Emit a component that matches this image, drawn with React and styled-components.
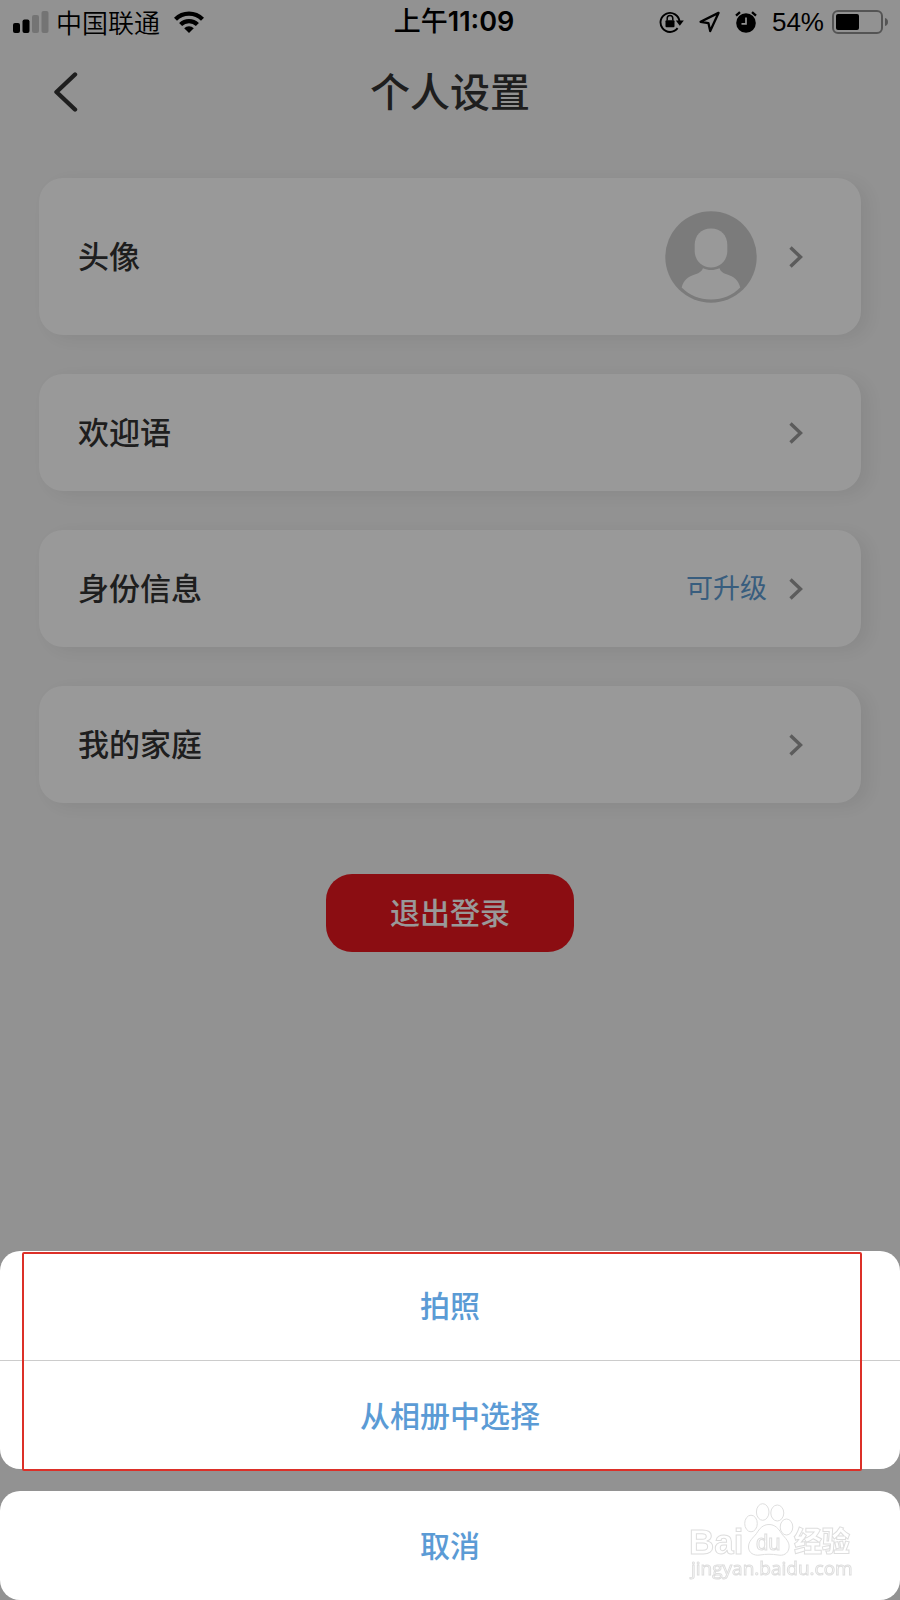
import { useState } from 'react';
import styled, { createGlobalStyle } from 'styled-components';

const rows = [
  { id: 'avatar', label: '头像', avatar: true },
  { id: 'welcome', label: '欢迎语' },
  { id: 'identity', label: '身份信息', note: '可升级' },
  { id: 'family', label: '我的家庭' },
];

function StatusBar() {
  return (
    <Status>
      <StatusGroup>
        <svg width="36" height="22" viewBox="0 0 36 22">
          <rect x="0" y="12" width="7" height="10" rx="2" />
          <rect x="9.500" y="8.500" width="7" height="13.500" rx="2" />
          <rect x="19" y="4" width="7" height="18" rx="2" opacity=".2" />
          <rect x="28.500" y="0" width="7" height="22" rx="2" opacity=".2" />
        </svg>
        <Carrier>中国联通</Carrier>
        <WifiIcon width="30" height="22" viewBox="0 0 30 22">
          <g fill="none" stroke="#000" strokeWidth="4.300">
            <path d="M1.500 8.200a19.200 19.200 0 0 1 27 0" />
            <path d="M6.600 13.600a11.900 11.900 0 0 1 16.800 0" />
          </g>
          <path d="M15 22l-4.800-4.800a6.800 6.800 0 0 1 9.600 0z" />
        </WifiIcon>
      </StatusGroup>
      <Time>
        <span>上午</span>11:09
      </Time>
      <StatusGroup $end>
        <svg width="25" height="22" viewBox="0 0 25 22">
          <path
            d="M18.600 17.200A9.500 9.500 0 1 1 20.500 10.500"
            fill="none"
            stroke="#000"
            strokeWidth="1.900"
          />
          <path d="M16.800 9.600h8l-4 5.200z" />
          <rect x="6.500" y="9.300" width="9" height="7" rx="1" />
          <path d="M8.200 9.500V7.300a2.800 2.800 0 0 1 5.600 0v2.200" fill="none" stroke="#000" strokeWidth="1.500" />
        </svg>
        <svg width="21" height="22" viewBox="0 0 21 22">
          <path
            d="M19.500 1.900L1.600 10.800l7.800 1.300 1.800 8z"
            fill="none"
            stroke="#000"
            strokeWidth="2.300"
            strokeLinejoin="round"
          />
        </svg>
        <svg width="22" height="22" viewBox="0 0 22 22">
          <circle cx="11" cy="12" r="9.800" />
          <path d="M1 4.600L5 1.200M21 4.600L17 1.200" stroke="#000" strokeWidth="2.400" />
          <path d="M11 6.500v6.300H6.500" fill="none" stroke="#f3f3f3" strokeWidth="1.700" />
        </svg>
        <Percent>54%</Percent>
        <svg width="57" height="24" viewBox="0 0 57 24">
          <rect x="1" y="1" width="49" height="22" rx="5" fill="none" stroke="#000" strokeOpacity=".42" strokeWidth="2" />
          <rect x="4" y="4" width="23" height="16" rx="2" />
          <path d="M53 8v8c2-.6 3-2 3-4s-1-3.400-3-4z" fillOpacity=".42" />
        </svg>
      </StatusGroup>
    </Status>
  );
}

function Avatar() {
  return (
    <svg width="92" height="92" viewBox="0 0 92 92">
      <circle cx="46" cy="46" r="45.700" fill="#cecece" />
      <path
        d="M46 17.500c10 0 16.300 7 16.300 16.500v6c0 9.500-7.300 16.500-16.300 16.500S29.700 49.500 29.700 40v-6C29.700 24.500 36 17.500 46 17.500z"
        fill="#fff"
      />
      <path
        d="M38 57.300c5 2.400 11 2.400 16.500 0 .8 3 3 4.600 7 6 7.500 2.300 12 6.200 13.700 13.200C67.500 84.500 57.500 88.500 46 88.500S24.500 84.500 16.700 76.500c1.700-7 6.300-10.900 13.800-13.200 4-1.400 6.500-3 7.500-6z"
        fill="#fff"
      />
    </svg>
  );
}

function Watermark() {
  return (
    <WatermarkSvg width="172" height="84" viewBox="0 0 172 84">
      <g fill="#fff" stroke="#dedede" strokeWidth="1">
        <text className="latin" x="7" y="53" fontSize="35" fontWeight="700">Bai</text>
        <ellipse cx="69" cy="22.500" rx="6.300" ry="8.300" />
        <ellipse cx="80.700" cy="11" rx="6.300" ry="8.300" />
        <ellipse cx="95.300" cy="12" rx="6.500" ry="8" />
        <ellipse cx="104.500" cy="26" rx="6.300" ry="8" />
        <path d="M87 23.500c6 0 9.500 4 12.500 9 4 5 8.500 8.500 7.500 14.500-1 6-6 8-11 7-6-1-12-1-18 0-6 1-11.500-2-11.500-8 0-6 4.500-9 8-13.500 3-5 6.500-9 12.500-9z" />
        <text className="latin" x="74" y="49" fontSize="22">du</text>
        <text className="cjk" x="112" y="51" fontSize="28" fontWeight="900">经验</text>
        <text x="9" y="74" fontSize="19">jingyan.baidu.com</text>
      </g>
    </WatermarkSvg>
  );
}

function App() {
  const [open, setOpen] = useState(true);

  return (
    <Page>
      <GlobalStyle />
      <StatusBar />
      <Header>
        <BackButton aria-label="返回">
          <svg width="24" height="40" viewBox="0 0 24 40">
            <path
              d="M21 2.500L2.500 20 21 37.500"
              fill="none"
              stroke="#333"
              strokeWidth="4.400"
              strokeLinecap="round"
              strokeLinejoin="round"
            />
          </svg>
        </BackButton>
        <h1>个人设置</h1>
      </Header>
      <List>
        {rows.map((row) => (
          <Row key={row.id} $tall={row.avatar} onClick={() => row.avatar && setOpen(true)}>
            <Label>{row.label}</Label>
            <RowEnd $wide={row.avatar}>
              {row.avatar && <Avatar />}
              {row.note && <Note>{row.note}</Note>}
              <svg width="14" height="22" viewBox="0 0 14 22">
                <path d="M1.500 1.500L11.500 11l-10 9.500" fill="none" stroke="#999" strokeWidth="3.400" />
              </svg>
            </RowEnd>
          </Row>
        ))}
      </List>
      <LogoutButton>退出登录</LogoutButton>

      {open && (
        <Overlay onClick={() => setOpen(false)}>
          <SheetGroup>
            <SheetButton>拍照</SheetButton>
            <SheetButton>从相册中选择</SheetButton>
            <Highlight />
          </SheetGroup>
          <SheetGroup>
            <SheetButton>取消</SheetButton>
            <Watermark />
          </SheetGroup>
        </Overlay>
      )}
    </Page>
  );
}

const GlobalStyle = createGlobalStyle`
  * {
    box-sizing: border-box;
  }

  body {
    margin: 0;
    background: #f3f3f3;
  }

  button {
    border: none;
    padding: 0;
    background: none;
    font-family: inherit;
    cursor: pointer;
  }

  svg {
    display: block;
    flex-shrink: 0;
  }
`;

const Page = styled.div`
  min-height: 100vh;
  display: flex;
  flex-direction: column;
  background: #f3f3f3;
  color: #333;
  font-family: 'Noto Sans CJK SC', sans-serif;
`;

const Status = styled.div`
  display: grid;
  grid-template-columns: 1fr auto 1fr;
  align-items: center;
  height: 44px;
  padding: 0 11px 0 13px;
  color: #000;
`;

const StatusGroup = styled.div`
  display: flex;
  align-items: center;
  justify-content: ${({ $end }) => ($end ? 'flex-end' : 'flex-start')};
  gap: ${({ $end }) => ($end ? '15px' : '7px')};
`;

const Carrier = styled.span`
  font-size: 26px;
  font-weight: 350;
  line-height: 44px;
`;

const WifiIcon = styled.svg`
  margin-left: 7px;
`;

const Time = styled.span`
  padding-left: 6px;
  font-family: Inter, 'Noto Sans CJK SC', sans-serif;
  font-size: 27px;
  font-weight: 600;
  line-height: 44px;

  span {
    font-weight: 500;
  }
`;

const Percent = styled.span`
  margin-right: -7px;
  font-family: 'Liberation Sans', Arial, sans-serif;
  font-size: 26px;
  line-height: 44px;
`;

const Header = styled.header`
  display: grid;
  grid-template-columns: 1fr auto 1fr;
  align-items: center;
  height: 96px;
  padding: 0 54px;

  h1 {
    margin: 0;
    padding-bottom: 4px;
    font-size: 40px;
    font-weight: 500;
    line-height: 60px;
  }
`;

const BackButton = styled.button`
  justify-self: start;
`;

const List = styled.div`
  display: flex;
  flex-direction: column;
  gap: 39px;
  padding: 38px 39px 0;
`;

const Row = styled.button`
  display: flex;
  align-items: center;
  justify-content: space-between;
  height: ${({ $tall }) => ($tall ? '157px' : '117px')};
  padding: 0 58px 0 39px;
  border-radius: 24px;
  background: #fff;
  box-shadow: 8px 4px 16px rgba(0, 0, 0, 0.06);
  color: #333;
`;

const Label = styled.span`
  padding-bottom: 4px;
  font-size: 31px;
  font-weight: 500;
  line-height: 44px;
`;

const RowEnd = styled.span`
  display: flex;
  align-items: center;
  gap: ${({ $wide }) => ($wide ? '32px' : '22px')};
`;

const Note = styled.span`
  padding-bottom: 4px;
  color: #5e9bd2;
  font-size: 27px;
  font-weight: 400;
  line-height: 40px;
`;

const LogoutButton = styled.button`
  align-self: center;
  height: 78px;
  margin-top: 71px;
  padding: 0 64px 4px;
  border-radius: 26px;
  background: #e8171f;
  color: #fff;
  font-size: 30px;
  font-weight: 500;
`;

const Overlay = styled.div`
  position: fixed;
  top: 0;
  right: 0;
  bottom: 0;
  left: 0;
  display: flex;
  flex-direction: column;
  justify-content: flex-end;
  gap: 22px;
  background: rgba(0, 0, 0, 0.4);
`;

const SheetGroup = styled.div`
  position: relative;
  display: flex;
  flex-direction: column;
  border-radius: 20px;
  background: #fff;
`;

const SheetButton = styled.button`
  height: 109px;
  padding-bottom: 4px;
  color: #5b9bd5;
  font-size: 30px;
  font-weight: 500;

  & + & {
    padding-bottom: 2px;
    border-top: 1px solid #ccc;
  }
`;

const Highlight = styled.div`
  position: absolute;
  top: 1px;
  right: 38px;
  bottom: -2px;
  left: 22px;
  border: 2px solid #dc3028;
  border-radius: 2px;
  pointer-events: none;
`;

const WatermarkSvg = styled.svg`
  position: absolute;
  right: 46px;
  bottom: 15px;
  font-family: 'Open Sans', sans-serif;
  pointer-events: none;

  .latin {
    font-family: 'Liberation Sans', Arial, sans-serif;
  }

  .cjk {
    font-family: 'Noto Sans CJK SC', sans-serif;
  }
`;

export default App;
